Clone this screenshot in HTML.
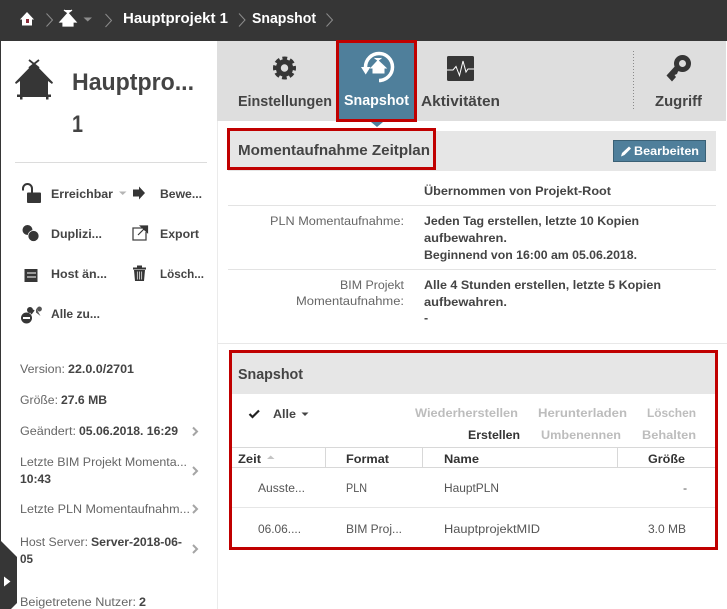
<!DOCTYPE html>
<html><head><meta charset="utf-8"><style>
html,body{margin:0;padding:0;background:#fff;width:727px;height:609px;overflow:hidden}
svg{display:block}
text{font-family:"Liberation Sans",sans-serif;font-size:12.4px;fill:#444}
.b{font-weight:700}
.t{font-size:14.4px;font-weight:700}
.g{fill:#666}
.l{fill:#bdbdbd;font-weight:700}
.s{font-weight:700;fill:#444}
</style></head><body>
<svg width="727" height="609" viewBox="0 0 727 609" xmlns="http://www.w3.org/2000/svg">
<rect width="727" height="609" fill="#fff"/>
<!-- top bar -->
<rect width="727" height="41" fill="#363636"/>
<path d="M20 19.500L27 12L34 19.500L32 19.500V25.500H22V19.500Z" fill="#fff"/><rect x="26" y="19" width="3" height="4" fill="#8a2b3a"/>
<path d="M46.500 13.500L52.500 20L46.500 26.500" fill="none" stroke="#8c8c8c" stroke-width="1"/>
<path d="M64 10L68 13L72 10M68 13L60 22L63 22V26H73V22L76 22Z" fill="#fff" stroke="#fff" stroke-width="1.200"/>
<path d="M83.500 17.500H92L87.700 21.500Z" fill="#8d8d8d"/>
<path d="M105.500 14L111.500 20.500L105.500 27" fill="none" stroke="#8c8c8c" stroke-width="1"/>
<text x="123" y="23" class="t" style="fill:#fff" textLength="105" lengthAdjust="spacingAndGlyphs">Hauptprojekt 1</text>
<path d="M239 13.500L245 20L239 26.500" fill="none" stroke="#8c8c8c" stroke-width="1"/>
<text x="252" y="23" class="t" style="fill:#fff" textLength="64" lengthAdjust="spacingAndGlyphs">Snapshot</text>
<path d="M326.500 13.500L332.500 20L326.500 26.500" fill="none" stroke="#8c8c8c" stroke-width="1"/>
<!-- left edge -->
<rect x="0" y="41" width="1" height="568" fill="#363636"/>
<rect x="217" y="121" width="1" height="488" fill="#ebebeb"/>
<!-- tabs -->
<rect x="217" y="41" width="509" height="80" fill="#dedede"/>
<line x1="633.500" y1="51" x2="633.500" y2="111" stroke="#8a8a8a" stroke-dasharray="1 2"/>
<circle cx="284.500" cy="68" r="9.500" fill="none" stroke="#363636" stroke-width="4" stroke-dasharray="4.600 2.860" stroke-dashoffset="2.300"/>
<circle cx="284.500" cy="68" r="6.200" fill="none" stroke="#363636" stroke-width="5"/>
<text x="238" y="106" class="t" textLength="94" lengthAdjust="spacingAndGlyphs">Einstellungen</text>
<rect x="337.500" y="41.500" width="78" height="79" fill="#4f7f9b" stroke="#c00000" stroke-width="3"/>
<path d="M371 122H383L377 127Z" fill="#4f7f9b"/>
<path d="M365.500 67A13.500 13.500 0 1 1 379 80.500" fill="none" stroke="#fff" stroke-width="3.500"/>
<path d="M361 67H370.500L365.700 74.500Z" fill="#fff"/>
<path d="M374.500 58L378 60.500L381.500 58M378 60.500L371 68H373V73H384V68H386Z" fill="#fff" stroke="#fff" stroke-width="1"/>
<text x="344" y="105" class="t" style="fill:#fff" textLength="65" lengthAdjust="spacingAndGlyphs">Snapshot</text>
<rect x="447" y="56" width="27" height="25" rx="1.500" fill="#363636"/>
<path d="M447 70H453L456 66.500L459.500 75.500L463 61L466 72L468 69H474" fill="none" stroke="#fff" stroke-width="1"/>
<text x="421" y="106" class="t" textLength="79" lengthAdjust="spacingAndGlyphs">Aktivitäten</text>
<circle cx="682.500" cy="63.500" r="6" fill="none" stroke="#363636" stroke-width="5"/>
<path d="M677 64L666.500 75.500L672 81.500L676 77L674.500 75L677 74L678 71.500L683 69Z" fill="#363636"/>
<text x="655" y="106" class="t" textLength="47" lengthAdjust="spacingAndGlyphs">Zugriff</text>
<!-- sidebar head -->
<path d="M29 60L39 68M39 60L29 68" stroke="#363636" stroke-width="1.800"/>
<path d="M34 63L15 82.500L16 84L20 81V95H48V81L52 84L53 82.500Z" fill="#363636"/>
<rect x="17" y="94.500" width="34" height="2.500" fill="#363636"/>
<rect x="20" y="95" width="2.500" height="4.500" fill="#363636"/>
<rect x="46" y="95" width="2.500" height="4.500" fill="#363636"/>
<text x="72" y="90" class="b" style="font-size:24px" textLength="122" lengthAdjust="spacingAndGlyphs">Hauptpro...</text>
<text x="72" y="132" class="b" style="font-size:24px" textLength="11" lengthAdjust="spacingAndGlyphs">1</text>
<rect x="15" y="162" width="192" height="1" fill="#dcdcdc"/>
<!-- actions -->
<rect x="27" y="192.500" width="14" height="10.500" rx="1" fill="#363636"/>
<path d="M23 190.500V188.500A4.500 4.500 0 0 1 32 188.500V193" fill="none" stroke="#363636" stroke-width="2"/>
<text x="51" y="198" class="s" textLength="62" lengthAdjust="spacingAndGlyphs">Erreichbar</text>
<path d="M119 191.500H126.500L122.700 195Z" fill="#b5b5b5"/>
<path d="M133 189.500H139V186.500L145 193L139 199.500V196.500H133Z" fill="#363636"/>
<text x="160" y="198" class="s" textLength="42" lengthAdjust="spacingAndGlyphs">Bewe...</text>
<circle cx="27.500" cy="230" r="5" fill="#363636"/><circle cx="33.500" cy="236" r="5.500" fill="#363636" stroke="#fff" stroke-width=".7"/>
<text x="51" y="238" class="s" textLength="51" lengthAdjust="spacingAndGlyphs">Duplizi...</text>
<path d="M142 228H133V240H146V232" fill="none" stroke="#444" stroke-width="1.300"/>
<path d="M138 235L144 229M140.500 226H147.500V232.500Z" fill="#363636" stroke="#363636" stroke-width="1.200"/>
<text x="160" y="238" class="s" textLength="39" lengthAdjust="spacingAndGlyphs">Export</text>
<rect x="24.500" y="269" width="13" height="13" fill="#363636"/>
<path d="M27 273H36M27 277H36" stroke="#fff" stroke-width="1"/>
<text x="51" y="278" class="s" textLength="56" lengthAdjust="spacingAndGlyphs">Host än...</text>
<path d="M133 267.500H146V269.500H133Z" fill="#363636"/><rect x="137" y="265.500" width="5" height="2" fill="#363636"/>
<path d="M134 270H145L144 281H135Z" fill="#363636"/>
<path d="M137.300 271.500V279.500M139.500 271.500V279.500M141.700 271.500V279.500" stroke="#fff" stroke-width=".7"/>
<text x="160" y="278" class="s" textLength="44" lengthAdjust="spacingAndGlyphs">Lösch...</text>
<circle cx="30" cy="310" r="3" fill="#363636"/>
<path d="M36 308L40.500 316L36 312.500ZM37 309.500A2.500 2.500 0 1 1 38 311Z" fill="#555"/>
<circle cx="26.500" cy="318" r="5.500" fill="#363636"/><rect x="23" y="317" width="7" height="2" fill="#fff"/>
<path d="M31 314L34 310" stroke="#363636" stroke-width="1.500"/>
<text x="51" y="318" class="s" textLength="49" lengthAdjust="spacingAndGlyphs">Alle zu...</text>
<!-- info -->
<text x="20" y="373" class="g" textLength="45" lengthAdjust="spacingAndGlyphs">Version:</text>
<text x="68" y="373" class="s" textLength="66" lengthAdjust="spacingAndGlyphs">22.0.0/2701</text>
<text x="20" y="404" class="g" textLength="38" lengthAdjust="spacingAndGlyphs">Größe:</text>
<text x="61" y="404" class="s" textLength="46" lengthAdjust="spacingAndGlyphs">27.6 MB</text>
<text x="20" y="435" class="g" textLength="56" lengthAdjust="spacingAndGlyphs">Geändert:</text>
<text x="79" y="435" class="s" textLength="99" lengthAdjust="spacingAndGlyphs">05.06.2018. 16:29</text>
<text x="20" y="466" class="g" textLength="167" lengthAdjust="spacingAndGlyphs">Letzte BIM Projekt Momenta...</text>
<text x="20" y="483" class="s" textLength="31" lengthAdjust="spacingAndGlyphs">10:43</text>
<text x="20" y="513" class="g" textLength="170" lengthAdjust="spacingAndGlyphs">Letzte PLN Momentaufnahm...</text>
<text x="20" y="546" class="g" textLength="68" lengthAdjust="spacingAndGlyphs">Host Server:</text>
<text x="91" y="546" class="s" textLength="91" lengthAdjust="spacingAndGlyphs">Server-2018-06-</text>
<text x="20" y="563" class="s" textLength="13" lengthAdjust="spacingAndGlyphs">05</text>
<text x="20" y="606" class="g" textLength="116" lengthAdjust="spacingAndGlyphs">Beigetretene Nutzer:</text>
<text x="139" y="606" class="s" textLength="7" lengthAdjust="spacingAndGlyphs">2</text>
<path d="M193 427.500L197 431.500L193 435.500M193 467L197 471L193 475M193 505L197 509L193 513M193 545L197 549L193 553" fill="none" stroke="#a5a5a5" stroke-width="2"/>
<path d="M0 540L17 557V603L11 609H0Z" fill="#363636"/>
<path d="M4 576.500L10.500 581.500L4 586.500Z" fill="#fff"/>
<!-- schedule header -->
<rect x="228" y="131" width="488" height="40" fill="#e6e6e6"/>
<rect x="228.500" y="129.500" width="206" height="39" fill="none" stroke="#c00000" stroke-width="3"/>
<text x="238" y="155" class="t" textLength="192" lengthAdjust="spacingAndGlyphs">Momentaufnahme Zeitplan</text>
<rect x="613.500" y="140.500" width="92" height="21" fill="#4f7f9b" stroke="#3a6075"/>
<path d="M621 156.500L622 153L629 146.500L631 148.500L624.500 155Z" fill="#fff"/>
<text x="634" y="155" class="b" style="fill:#fff" textLength="65" lengthAdjust="spacingAndGlyphs">Bearbeiten</text>
<!-- schedule rows -->
<text x="424" y="195" class="s" textLength="187" lengthAdjust="spacingAndGlyphs">Übernommen von Projekt-Root</text>
<rect x="228" y="205" width="488" height="1" fill="#e3e3e3"/>
<text x="270" y="225" class="g" textLength="134" lengthAdjust="spacingAndGlyphs">PLN Momentaufnahme:</text>
<text x="424" y="225" class="s" textLength="215" lengthAdjust="spacingAndGlyphs">Jeden Tag erstellen, letzte 10 Kopien</text>
<text x="424" y="242" class="s" textLength="83" lengthAdjust="spacingAndGlyphs">aufbewahren.</text>
<text x="424" y="259" class="s" textLength="213" lengthAdjust="spacingAndGlyphs">Beginnend von 16:00 am 05.06.2018.</text>
<rect x="228" y="269" width="488" height="1" fill="#e3e3e3"/>
<text x="340" y="289" class="g" textLength="64" lengthAdjust="spacingAndGlyphs">BIM Projekt</text>
<text x="296" y="305" class="g" textLength="108" lengthAdjust="spacingAndGlyphs">Momentaufnahme:</text>
<text x="424" y="289" class="s" textLength="237" lengthAdjust="spacingAndGlyphs">Alle 4 Stunden erstellen, letzte 5 Kopien</text>
<text x="424" y="306" class="s" textLength="83" lengthAdjust="spacingAndGlyphs">aufbewahren.</text>
<text x="424" y="322" class="s">-</text>
<rect x="218" y="343" width="509" height="1" fill="#e8e8e8"/>
<!-- snapshot section -->
<rect x="231" y="352" width="485" height="42" fill="#e6e6e6"/>
<text x="238" y="379" class="t" textLength="65" lengthAdjust="spacingAndGlyphs">Snapshot</text>
<path d="M249.500 414L252.500 417L259 410.500" fill="none" stroke="#222" stroke-width="2.200"/>
<text x="273" y="418" class="s" textLength="23" lengthAdjust="spacingAndGlyphs">Alle</text>
<path d="M301.500 412.500H308.500L305 416Z" fill="#444"/>
<text x="415" y="417" class="l" textLength="103" lengthAdjust="spacingAndGlyphs">Wiederherstellen</text>
<text x="538" y="417" class="l" textLength="89" lengthAdjust="spacingAndGlyphs">Herunterladen</text>
<text x="647" y="417" class="l" textLength="49" lengthAdjust="spacingAndGlyphs">Löschen</text>
<text x="468" y="439" class="b" style="fill:#333" textLength="52" lengthAdjust="spacingAndGlyphs">Erstellen</text>
<text x="541" y="439" class="l" textLength="80" lengthAdjust="spacingAndGlyphs">Umbenennen</text>
<text x="642" y="439" class="l" textLength="54" lengthAdjust="spacingAndGlyphs">Behalten</text>
<rect x="231" y="447" width="485" height="1" fill="#d8d8d8"/>
<rect x="231" y="467" width="485" height="1" fill="#d8d8d8"/>
<rect x="325" y="448" width="1" height="19" fill="#d8d8d8"/>
<rect x="422" y="448" width="1" height="19" fill="#d8d8d8"/>
<rect x="617" y="448" width="1" height="19" fill="#d8d8d8"/>
<text x="238" y="463" class="b" style="fill:#333" textLength="23" lengthAdjust="spacingAndGlyphs">Zeit</text>
<path d="M267 459H274.500L270.700 455.500Z" fill="#c4c4c4"/>
<text x="346" y="463" class="b" style="fill:#333" textLength="43" lengthAdjust="spacingAndGlyphs">Format</text>
<text x="444" y="463" class="b" style="fill:#333" textLength="35" lengthAdjust="spacingAndGlyphs">Name</text>
<text x="648" y="463" class="b" style="fill:#333" textLength="37" lengthAdjust="spacingAndGlyphs">Größe</text>
<text x="258" y="492" class="g" style="fill:#555" textLength="47" lengthAdjust="spacingAndGlyphs">Ausste...</text>
<text x="346" y="492" class="g" style="fill:#555" textLength="21" lengthAdjust="spacingAndGlyphs">PLN</text>
<text x="444" y="492" class="g" style="fill:#555" textLength="55" lengthAdjust="spacingAndGlyphs">HauptPLN</text>
<text x="683" y="492" class="g" style="fill:#555">-</text>
<rect x="231" y="507" width="485" height="1" fill="#e6e6e6"/>
<text x="258" y="533" class="g" style="fill:#555" textLength="43" lengthAdjust="spacingAndGlyphs">06.06....</text>
<text x="346" y="533" class="g" style="fill:#555" textLength="56" lengthAdjust="spacingAndGlyphs">BIM Proj...</text>
<text x="444" y="533" class="g" style="fill:#555" textLength="96" lengthAdjust="spacingAndGlyphs">HauptprojektMID</text>
<text x="648" y="533" class="g" style="fill:#555" textLength="38" lengthAdjust="spacingAndGlyphs">3.0 MB</text>
<rect x="230.500" y="351.500" width="486" height="197" fill="none" stroke="#c00000" stroke-width="3"/>
</svg>
</body></html>
